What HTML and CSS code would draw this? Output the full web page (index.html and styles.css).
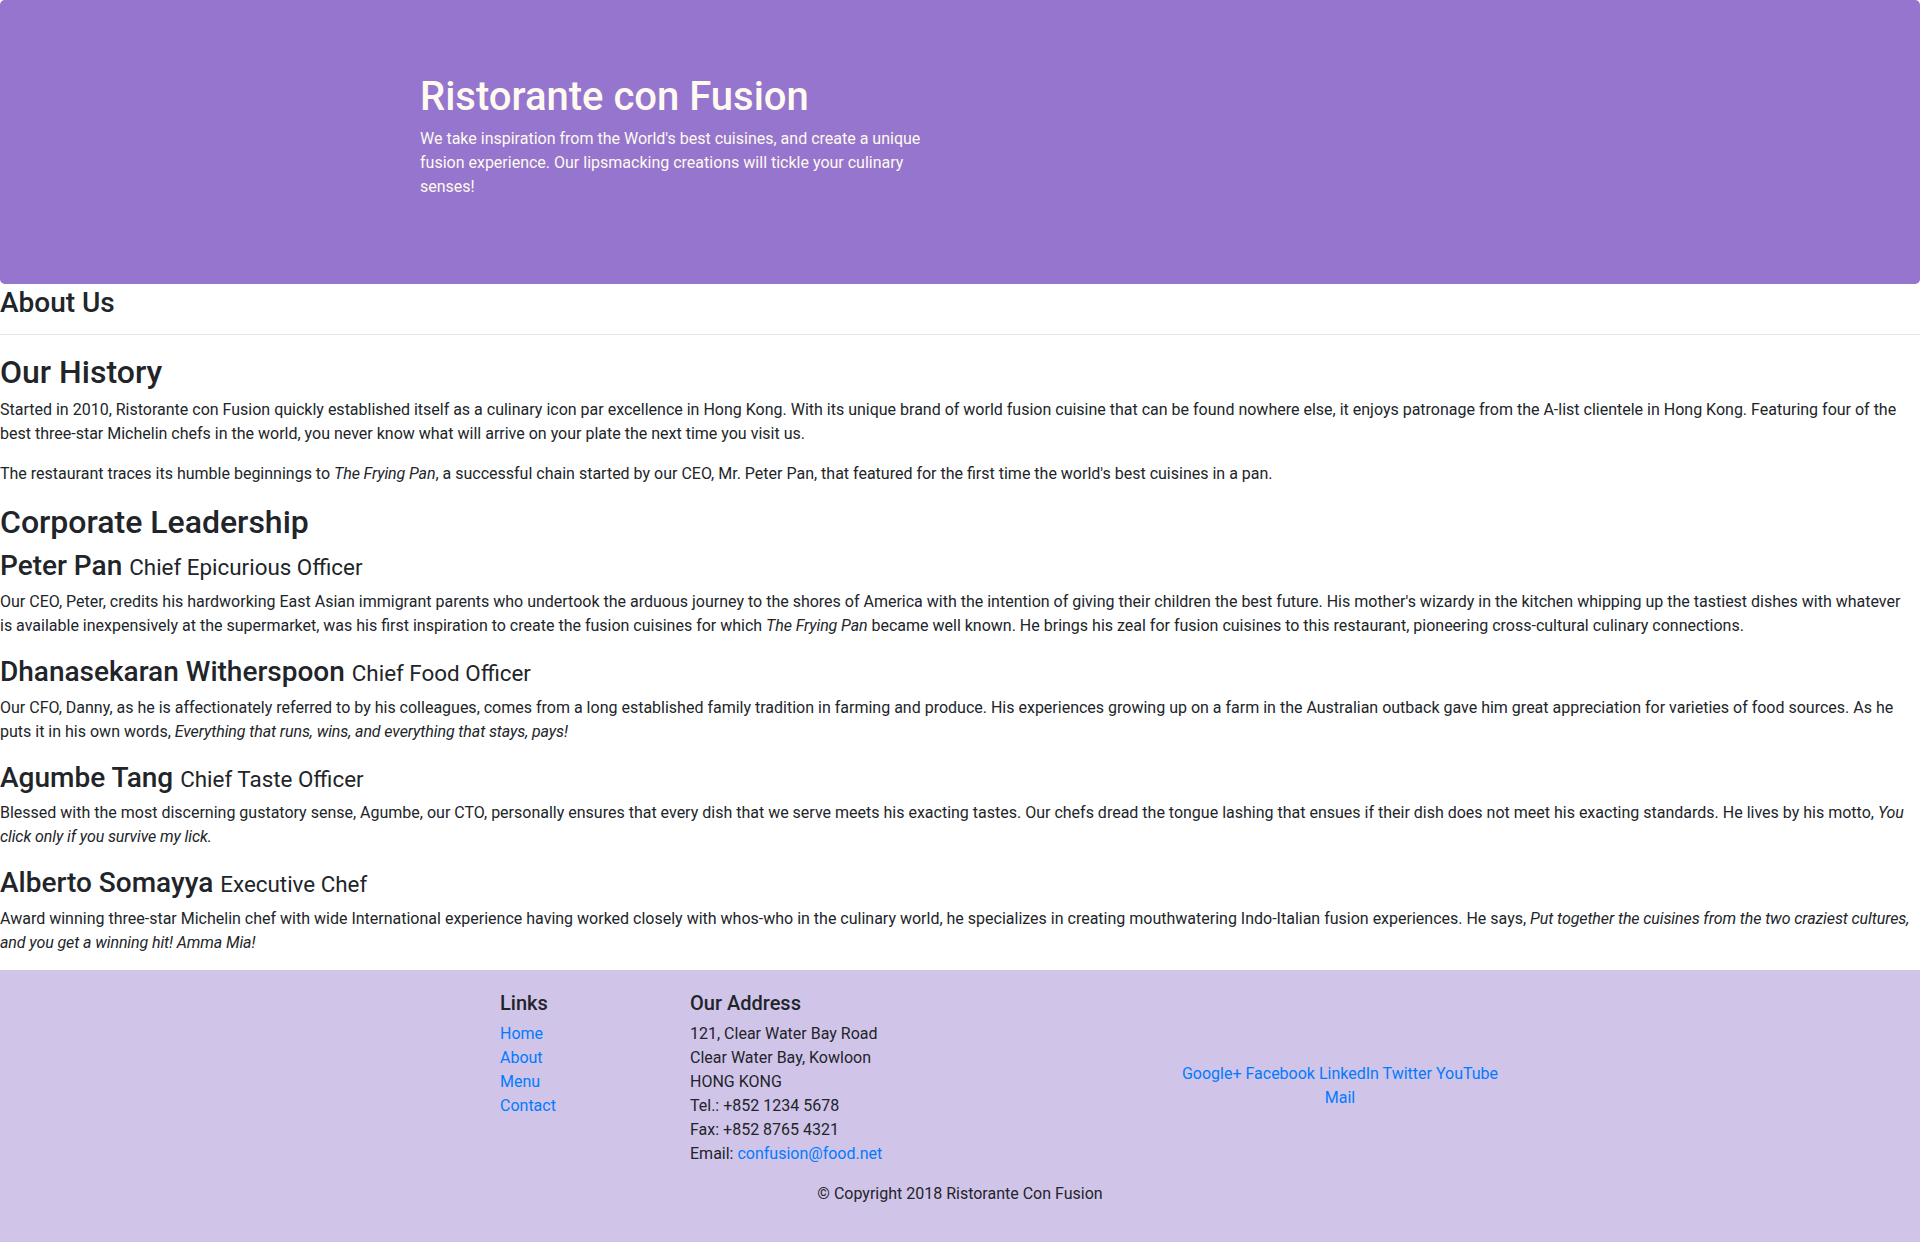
FILE: index.html
```html
<!DOCTYPE html>
<html lang="en">
<head>
<meta charset="utf-8">
<title>Ristorante con Fusion: About Us</title>
<link rel="stylesheet" href="styles.css">
</head>
<body>
<header class="jumbotron">
  <div class="container">
    <div class="row row-header">
      <div class="col-half">
        <h1 class="jumbo-title">Ristorante con Fusion</h1>
        <p class="jumbo-text">We take inspiration from the World's best cuisines, and create a unique fusion experience. Our lipsmacking creations will tickle your culinary senses!</p>
      </div>
    </div>
  </div>
</header>

<main class="content">
  <section class="about-head">
    <h3 class="h3">About Us</h3>
    <hr class="rule">
  </section>

  <section class="history">
    <h2 class="h2">Our History</h2>
    <p class="text">Started in 2010, Ristorante con Fusion quickly established itself as a culinary icon par excellence in Hong Kong. With its unique brand of world fusion cuisine that can be found nowhere else, it enjoys patronage from the A-list clientele in Hong Kong. Featuring four of the best three-star Michelin chefs in the world, you never know what will arrive on your plate the next time you visit us.</p>
    <p class="text">The restaurant traces its humble beginnings to <em class="it">The Frying Pan</em>, a successful chain started by our CEO, Mr. Peter Pan, that featured for the first time the world's best cuisines in a pan.</p>
  </section>

  <section class="leadership">
    <h2 class="h2">Corporate Leadership</h2>

    <h3 class="h3">Peter Pan <small class="sub">Chief Epicurious Officer</small></h3>
    <p class="text">Our CEO, Peter, credits his hardworking East Asian immigrant parents who undertook the arduous journey to the shores of America with the intention of giving their children the best future. His mother's wizardy in the kitchen whipping up the tastiest dishes with whatever is available inexpensively at the supermarket, was his first inspiration to create the fusion cuisines for which <em class="it">The Frying Pan</em> became well known. He brings his zeal for fusion cuisines to this restaurant, pioneering cross-cultural culinary connections.</p>

    <h3 class="h3">Dhanasekaran Witherspoon <small class="sub">Chief Food Officer</small></h3>
    <p class="text">Our CFO, Danny, as he is affectionately referred to by his colleagues, comes from a long established family tradition in farming and produce. His experiences growing up on a farm in the Australian outback gave him great appreciation for varieties of food sources. As he puts it in his own words, <em class="it">Everything that runs, wins, and everything that stays, pays!</em></p>

    <h3 class="h3">Agumbe Tang <small class="sub">Chief Taste Officer</small></h3>
    <p class="text">Blessed with the most discerning gustatory sense, Agumbe, our CTO, personally ensures that every dish that we serve meets his exacting tastes. Our chefs dread the tongue lashing that ensues if their dish does not meet his exacting standards. He lives by his motto, <em class="it">You click only if you survive my lick.</em></p>

    <h3 class="h3">Alberto Somayya <small class="sub">Executive Chef</small></h3>
    <p class="text">Award winning three-star Michelin chef with wide International experience having worked closely with whos-who in the culinary world, he specializes in creating mouthwatering Indo-Italian fusion experiences. He says, <em class="it">Put together the cuisines from the two craziest cultures, and you get a winning hit! Amma Mia!</em></p>
  </section>
</main>

<footer class="footer">
  <div class="container">
    <div class="row">
      <div class="col-links">
        <h5 class="h5">Links</h5>
        <ul class="link-list">
          <li><a class="link" href="#">Home</a></li>
          <li><a class="link" href="#">About</a></li>
          <li><a class="link" href="#">Menu</a></li>
          <li><a class="link" href="#">Contact</a></li>
        </ul>
      </div>
      <div class="col-address">
        <h5 class="h5">Our Address</h5>
        <address class="address">
          121, Clear Water Bay Road<br>
          Clear Water Bay, Kowloon<br>
          HONG KONG<br>
          Tel.: +852 1234 5678<br>
          Fax: +852 8765 4321<br>
          Email: <a class="link" href="#">confusion@food.net</a>
        </address>
      </div>
      <div class="col-social">
        <a class="link" href="#">Google+</a>
        <a class="link" href="#">Facebook</a>
        <a class="link" href="#">LinkedIn</a>
        <a class="link" href="#">Twitter</a>
        <a class="link" href="#">YouTube</a><br>
        <a class="link" href="#">Mail</a>
      </div>
    </div>
    <div class="row row-center">
      <p class="copyright">© Copyright 2018 Ristorante Con Fusion</p>
    </div>
  </div>
</footer>
</body>
</html>
```
FILE: styles.css
```css
* { box-sizing: border-box; }

body {
  margin: 0;
  font-family: Roboto, "Liberation Sans", sans-serif;
  font-size: 16px;
  line-height: 1.5;
  color: #212529;
  background: #fff;
}

.h2, .h3, .h5, .jumbo-title {
  margin: 0;
  font-weight: 500;
  line-height: 1.2;
}
.jumbo-title { font-size: 40px; padding-top: 3px; margin-bottom: 5px; }
.h2 { font-size: 32px; padding-top: 2px; margin-bottom: 6px; }
.h3 { font-size: 28px; padding-top: 2px; margin-bottom: 6px; }
.h5 { font-size: 20px; padding-top: 1px; margin-bottom: 7px; }

.sub { font-size: 80%; font-weight: 400; }

.text { margin: 0 0 15px 0; padding-top: 1px; }
.it { letter-spacing: -0.1px; }

.link { color: #007bff; text-decoration: none; }

.container {
  width: 1140px;
  margin: 0 auto;
  padding: 0 15px;
}
.row {
  display: flex;
  flex-wrap: wrap;
  margin: 0 -15px;
}
.row-header { margin: 0 auto; }

/* Jumbotron */
.jumbotron {
  background: #9575CD;
  color: floralwhite;
  padding: 70px 30px;
  border-radius: 4.8px;
}
.col-half {
  width: 555px;
  padding: 0 15px;
}
.jumbo-text { margin: 0 0 15px 0; padding-top: 1px; }

/* Content */
.content { padding-right: 8px; }
.rule {
  margin: 14px -8px 16px 0;
  border: 0;
  border-top: 1px solid rgba(0,0,0,.1);
}

/* Footer */
.footer {
  background: #D1C4E9;
  padding: 20px 0;
}
.col-links {
  margin-left: 95px;
  width: 190px;
  padding: 0 15px;
}
.col-address {
  width: 475px;
  padding: 0 15px;
}
.col-social {
  width: 380px;
  padding: 0 15px;
  align-self: center;
  text-align: center;
}
.link-list {
  list-style: none;
  padding: 0;
  margin: 0 0 16px 0;
}
.address {
  font-style: normal;
  margin: 0 0 16px 0;
}
.row-center { justify-content: center; }
.copyright {
  margin: 0 0 16px 0;
  padding: 0 15px;
}
```
